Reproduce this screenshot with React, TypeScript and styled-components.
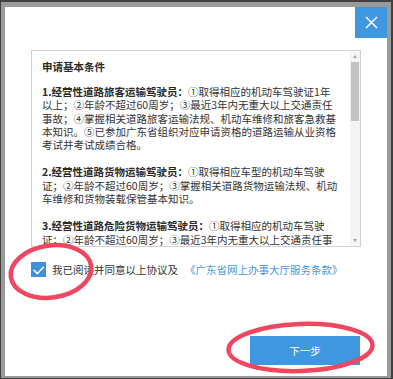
import { FC } from "react";
import styled, { createGlobalStyle } from "styled-components";

const GlobalStyle = createGlobalStyle`
  html, body {
    margin: 0;
    padding: 0;
    background: #999999;
  }
  * {
    box-sizing: border-box;
  }
`;

const Frame = styled.div`
  width: 393px;
  height: 379px;
  background: #9a9a9a;
  border-style: solid;
  border-color: #404040;
  border-width: 2px 2px 1px 1px;
  padding: 5px 4px 2px 4px;
  font-family: "Noto Sans CJK SC", "Noto Sans", sans-serif;
`;

const Dialog = styled.div`
  position: relative;
  height: 100%;
  background: #ffffff;
  display: flex;
  flex-direction: column;
`;

const Header = styled.div`
  display: flex;
  justify-content: flex-end;
  height: 31px;
`;

const CloseButton = styled.button`
  width: 32px;
  height: 31px;
  border: none;
  padding: 0;
  background: #3f97e0;
  display: flex;
  align-items: center;
  justify-content: center;
  cursor: pointer;
`;

const TermsBox = styled.div`
  margin: 12px 26px 0 26px;
  height: 197px;
  border: 1px solid #d2d2d2;
  display: flex;
`;

const TermsText = styled.div`
  flex: 1;
  overflow: hidden;
  padding: 9px 10px 0 10px;
  color: #333333;
  font-size: 10.5px;
  line-height: 13.3px;
`;

const Title = styled.div`
  font-weight: 700;
  color: #2b2b2b;
  margin-bottom: 11.7px;
`;

const Para = styled.div`
  margin-bottom: 14px;
`;

const Line = styled.div`
  white-space: nowrap;
`;

const Strong = styled.span`
  font-weight: 700;
  color: #2b2b2b;
`;

const Track = styled.div`
  width: 10px;
  background: #f4f4f4;
  display: flex;
  flex-direction: column;
  align-items: center;
`;

const Arrow = styled.div<{ $down?: boolean }>`
  height: 11px;
  width: 100%;
  display: flex;
  align-items: center;
  justify-content: center;
  margin-top: ${(p) => (p.$down ? "auto" : "0")};
  &::after {
    content: "";
    border-left: 2.5px solid transparent;
    border-right: 2.5px solid transparent;
    ${(p) =>
      p.$down
        ? "border-top: 3px solid #a3a3a3;"
        : "border-bottom: 3px solid #a3a3a3;"}
  }
`;

const Thumb = styled.div`
  width: 8px;
  height: 59px;
  background: #c3c3c3;
`;

const AgreeRow = styled.label`
  margin: 15px 0 0 26px;
  height: 15px;
  display: flex;
  align-items: center;
  gap: 6px;
  font-size: 10.5px;
  color: #333333;
  white-space: nowrap;
`;

const CheckBox = styled.span`
  width: 15px;
  height: 15px;
  background: #3f91de;
  display: flex;
  align-items: center;
  justify-content: center;
  flex-shrink: 0;
`;

const Link = styled.a`
  color: #4c95dc;
  text-decoration: none;
  margin-left: 1px;
`;

const Footer = styled.div`
  margin-top: 59px;
  display: flex;
  justify-content: flex-end;
  padding-right: 27px;
`;

const NextButton = styled.button`
  width: 110px;
  height: 29px;
  border: none;
  background: #3f97e0;
  color: #ffffff;
  font-family: inherit;
  font-size: 10.5px;
  cursor: pointer;
`;

const Marks = styled.svg`
  position: absolute;
  left: 0;
  top: 0;
  width: 100%;
  height: 100%;
  pointer-events: none;
  overflow: visible;
`;

const terms: { head: string; lines: string[] }[] = [
  {
    head: "1.经营性道路旅客运输驾驶员：",
    lines: [
      "①取得相应的机动车驾驶证1年",
      "以上；②年龄不超过60周岁；③最近3年内无重大以上交通责任",
      "事故；④掌握相关道路旅客运输法规、机动车维修和旅客急救基",
      "本知识。⑤已参加广东省组织对应申请资格的道路运输从业资格",
      "考试并考试成绩合格。",
    ],
  },
  {
    head: "2.经营性道路货物运输驾驶员：",
    lines: [
      "①取得相应车型的机动车驾驶",
      "证；②年龄不超过60周岁；③掌握相关道路货物运输法规、机动",
      "车维修和货物装载保管基本知识。",
    ],
  },
  {
    head: "3.经营性道路危险货物运输驾驶员：",
    lines: [
      "①取得相应的机动车驾驶",
      "证；②年龄不超过60周岁；③最近3年内无重大以上交通责任事",
      "故；④掌握相关道路危险货物运输法规、危险货物性质和应急处",
      "置基本知识。",
    ],
  },
];

const App: FC = () => {
  return (
    <Frame>
      <GlobalStyle />
      <Dialog>
        <Header>
          <CloseButton aria-label="关闭">
            <svg width="13" height="13" viewBox="0 0 13 13">
              <path d="M1 1 L12 12 M12 1 L1 12" stroke="#ffffff" strokeWidth="1.5" />
            </svg>
          </CloseButton>
        </Header>
        <TermsBox>
          <TermsText>
            <Title>申请基本条件</Title>
            {terms.map((t) => (
              <Para key={t.head}>
                {t.lines.map((line, i) => (
                  <Line key={i}>
                    {i === 0 && <Strong>{t.head}</Strong>}
                    {line}
                  </Line>
                ))}
              </Para>
            ))}
          </TermsText>
          <Track>
            <Arrow />
            <Thumb />
            <Arrow $down />
          </Track>
        </TermsBox>
        <AgreeRow>
          <CheckBox>
            <svg width="15" height="15" viewBox="0 0 15 15">
              <path d="M2.5 7.8 L6.3 11.6 L12.8 4.8" fill="none" stroke="#ffffff" strokeWidth="1.5" />
            </svg>
          </CheckBox>
          我已阅读并同意以上协议及
          <Link href="#">《广东省网上办事大厅服务条款》</Link>
        </AgreeRow>
        <Footer>
          <NextButton>下一步</NextButton>
        </Footer>
        <Marks>
          <ellipse
            cx="46"
            cy="264.5"
            rx="40.5"
            ry="26"
            fill="none"
            stroke="#f0465f"
            strokeWidth="4.5"
            transform="rotate(-8 46 264.5)"
          />
          <ellipse
            cx="295.5"
            cy="340.5"
            rx="72"
            ry="23.5"
            fill="none"
            stroke="#f0465f"
            strokeWidth="4.5"
            transform="rotate(-2 295.5 340.5)"
          />
        </Marks>
      </Dialog>
    </Frame>
  );
};

export default App;
